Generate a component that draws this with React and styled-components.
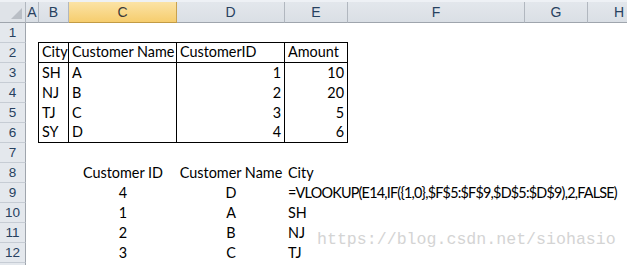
import styled, {createGlobalStyle} from 'styled-components';

const GlobalStyle = createGlobalStyle`
	html, body {
		margin: 0;
		padding: 0;
		background: #ffffff;
	}
	body {
		width: 627px;
		height: 265px;
		overflow: hidden;
	}
`;

const COLS = [
	{name: 'A', width: 13},
	{name: 'B', width: 30},
	{name: 'C', width: 108},
	{name: 'D', width: 108},
	{name: 'E', width: 63},
	{name: 'F', width: 177},
	{name: 'G', width: 63},
	{name: 'H', width: 63},
];

// sheet contents: [row][col] -> value or [value, align]
const cells = {
	2: {B: 'City', C: 'Customer Name', D: 'CustomerID', E: 'Amount'},
	3: {B: 'SH', C: 'A', D: ['1', 'right'], E: ['10', 'right']},
	4: {B: 'NJ', C: 'B', D: ['2', 'right'], E: ['20', 'right']},
	5: {B: 'TJ', C: 'C', D: ['3', 'right'], E: ['5', 'right']},
	6: {B: 'SY', C: 'D', D: ['4', 'right'], E: ['6', 'right']},
	8: {C: ['Customer ID', 'center'], D: ['Customer Name', 'center'], E: 'City'},
	9: {
		C: ['4', 'center'],
		D: ['D', 'center'],
		E: ['=VLOOKUP(E14,IF({1,0},$F$5:$F$9,$D$5:$D$9),2,FALSE)', 'left', true],
	},
	10: {C: ['1', 'center'], D: ['A', 'center'], E: 'SH'},
	11: {C: ['2', 'center'], D: ['B', 'center'], E: 'NJ'},
	12: {C: ['3', 'center'], D: ['C', 'center'], E: 'TJ'},
};

const TABLE_COLS = ['B', 'C', 'D', 'E'];

const Sheet = styled.div`
	position: relative;
	display: grid;
	grid-template-columns: 26px ${COLS.map(c => c.width + 'px').join(' ')};
	grid-template-rows: 21px repeat(13, 20px);
	width: 627px;
	height: 263px;
	overflow: hidden;
	border-top: 2px solid #eef1f5;
	font-family: Lato, 'Liberation Sans', sans-serif;
	font-size: 14.4px;
	color: #000000;
`;

const Corner = styled.div`
	position: relative;
	box-sizing: border-box;
	background: #dfe3e8;
	border-right: 1px solid #b1b7bf;
	border-bottom: 1px solid #9fa5ad;

	&::after {
		content: '';
		position: absolute;
		right: 3px;
		bottom: 3px;
		width: 0;
		height: 0;
		border-left: 11px solid transparent;
		border-bottom: 11px solid #b9bec5;
	}
`;

const ColHeader = styled.div`
	display: flex;
	align-items: center;
	justify-content: center;
	box-sizing: border-box;
	background: ${p =>
		p.$active
			? 'linear-gradient(#fbe3a6, #f6cd6e)'
			: 'linear-gradient(#e3e7ec, #dadfe5)'};
	border-right: 1px solid ${p => (p.$active ? '#c9a24e' : '#b1b7bf')};
	border-bottom: 1px solid ${p => (p.$active ? '#c29b45' : '#9fa5ad')};
	color: ${p => (p.$active ? '#3a3a3a' : '#27415f')};
	font-family: 'Liberation Sans', sans-serif;
	font-size: 14px;
`;

const RowHeader = styled.div`
	display: flex;
	align-items: center;
	justify-content: center;
	box-sizing: border-box;
	background: #e4e8ed;
	border-right: 1px solid #9fa5ad;
	border-bottom: 1px solid #c6ccd4;
	color: #27415f;
	font-family: 'Liberation Sans', sans-serif;
	font-size: 13.5px;
`;

const Cell = styled.div`
	display: flex;
	align-items: flex-end;
	justify-content: ${p =>
		p.$align === 'right' ? 'flex-end' : p.$align === 'center' ? 'center' : 'flex-start'};
	box-sizing: border-box;
	padding: 0 3px 1px 3px;
	margin-left: ${p => (p.$left ? '-1px' : '0')};
	margin-top: ${p => (p.$top ? '-1px' : '0')};
	border-left: ${p => (p.$left ? '1px solid #000' : 'none')};
	border-right: ${p => (p.$right ? '1px solid #000' : 'none')};
	border-top: ${p => (p.$top ? '1px solid #000' : 'none')};
	border-bottom: ${p => (p.$bottom ? '1px solid #000' : 'none')};
	letter-spacing: ${p => (p.$tight ? '-0.78px' : 'normal')};
	white-space: nowrap;
	overflow: visible;
	line-height: 18px;
`;

const Watermark = styled.div`
	position: absolute;
	left: 317px;
	top: 228px;
	font-family: 'Liberation Mono', monospace;
	font-size: 16.6px;
	color: #d4d4d4;
	white-space: nowrap;
	pointer-events: none;
`;

function tableBorders(row, col) {
	const inTable = row >= 2 && row <= 6 && TABLE_COLS.includes(col);
	if (!inTable) return {};
	return {
		$left: col === 'B',
		$right: true,
		$top: row === 2,
		$bottom: row === 2 || row === 6,
	};
}

export default function App() {
	const rows = Array.from({length: 13}, (_, i) => i + 1);

	return (
		<>
			<GlobalStyle />
			<Sheet>
				<Corner />
				{COLS.map(c => (
					<ColHeader key={c.name} $active={c.name === 'C'}>
						{c.name}
					</ColHeader>
				))}

				{rows.map(r => (
					<Row key={r} r={r} />
				))}

				<Watermark>https://blog.csdn.net/siohasio</Watermark>
			</Sheet>
		</>
	);
}

function Row({r}) {
	const data = cells[r] || {};
	// the last row only peeks in at the bottom edge, so it has no label
	const label = r < 13 ? r : '';
	return (
		<>
			<RowHeader>{label}</RowHeader>
			{COLS.map(c => {
				const raw = data[c.name];
				const [value, align, tight] = Array.isArray(raw) ? raw : [raw, 'left', false];
				return (
					<Cell key={c.name} $align={align} $tight={tight} {...tableBorders(r, c.name)}>
						{value}
					</Cell>
				);
			})}
		</>
	);
}
